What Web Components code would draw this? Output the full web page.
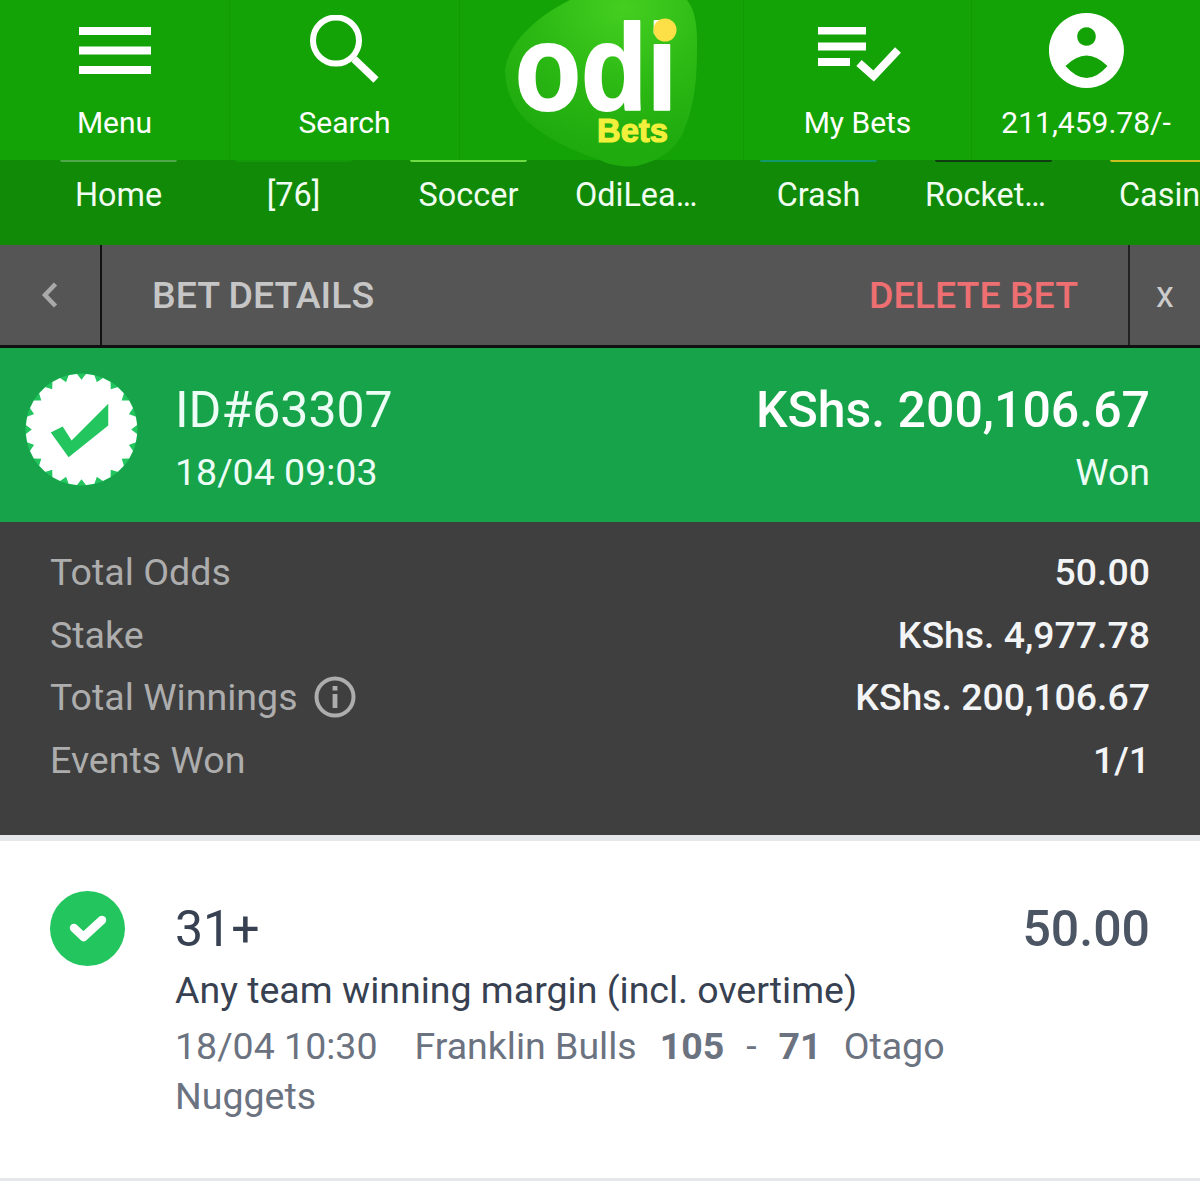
<!doctype html>
<html><head><meta charset="utf-8"><style>
html,body{margin:0;padding:0;background:#fff;font-family:Roboto,sans-serif}
body{width:1200px;height:1182px;overflow:hidden}
</style></head><body>
<odi-header></odi-header>
<odi-nav></odi-nav>
<bet-bar></bet-bar>
<bet-status></bet-status>
<bet-summary></bet-summary>
<bet-event></bet-event>
<script>
const def=(n,html)=>customElements.define(n,class extends HTMLElement{constructor(){super();this.attachShadow({mode:'open'}).innerHTML=html}});
def('odi-header',`<style>
:host{display:grid;grid-template-columns:230px 230px 284px 228px 228px;height:160px;background:#13a306;position:relative;z-index:2;color:#fff;font:400 30px Roboto,sans-serif}
.c{display:flex;flex-direction:column;align-items:center;border-right:1px solid #119a06;position:relative;box-sizing:border-box}
.c:last-child{border:0}
.i{height:104.5px;display:flex;align-items:center;justify-content:center}
span{display:block;line-height:36px}
svg{display:block}
.logo{position:absolute;left:45px;top:0;width:195px;height:170px;overflow:visible}
</style>
<div class="c"><div class="i"><svg width="72" height="47" style="margin-top:-4px"><path fill="#fff" d="M0 0h72v8H0zM0 19.5h72v8H0zM0 39h72v8H0z"/></svg></div><span>Menu</span></div>
<div class="c"><div class="i"><svg width="70" height="70" viewBox="0 0 70 70" style="margin-top:-4px"><circle cx="26" cy="25.5" r="23" fill="none" stroke="#fff" stroke-width="6"/><path d="M44 44L66 65" stroke="#fff" stroke-width="7.5" fill="none"/></svg></div><span>Search</span></div>
<div class="c"><svg class="logo" viewBox="0 0 195 170"><defs><radialGradient id="g" cx=".62" cy=".05" r=".85"><stop offset="0" stop-color="#44cf20"/><stop offset=".55" stop-color="#2cb914"/><stop offset="1" stop-color="#1fab0e"/></radialGradient></defs>
<path fill="url(#g)" d="M0 70C4 40 35 15 65 0L182 0C190 10 192 25 192 40C192 70 192 100 178 133C170 150 155 160 132 166C115 168 100 163 95 160C65 150 35 135 18 117C8 105 0 90 0 70Z"/>
<text x="10" y="110" fill="#fff" font-family="'Liberation Sans',sans-serif" font-weight="700" font-size="122" textLength="162" lengthAdjust="spacingAndGlyphs" stroke="#fff" stroke-width="1.8" stroke-linejoin="round">odi</text>
<circle cx="160" cy="30" r="11.5" fill="#fde047"/>
<text x="92" y="142" fill="#f2f03c" stroke="#f2f03c" stroke-width="1.2" font-family="'Liberation Sans',sans-serif" font-weight="700" font-size="34" textLength="71" lengthAdjust="spacingAndGlyphs">Bets</text></svg></div>
<div class="c"><div class="i"><svg width="84" height="56" viewBox="0 0 84 56" style="margin-top:5px;margin-left:4px"><path fill="#fff" d="M0 0h48v7.5H0zM0 15.5h48v8H0zM0 31h32v8H0z"/><path d="M41 36L55.6 49L80 23" fill="none" stroke="#fff" stroke-width="8"/></svg></div><span>My Bets</span></div>
<div class="c"><div class="i"><svg width="75" height="75" viewBox="0 0 75 75" style="margin-top:-4px;margin-left:1px"><path fill="#fff" fill-rule="evenodd" d="M37.5 0A37.5 37.5 0 1 1 37.4 0ZM37.5 14.2a9.3 9.3 0 1 0 .01 0ZM16.5 53Q27 42.5 37.5 42.5Q48 42.5 58.5 53Q48 65 37.5 65Q27 65 16.5 53Z"/></svg></div><span>211,459.78/-</span></div>`);
def('odi-nav',`<style>
:host{display:flex;height:85px;background:#118a08;color:#f0fdf0;font:400 32.4px Roboto,sans-serif;overflow:hidden;padding-left:31px;box-sizing:border-box}
div{flex:0 0 175px;box-sizing:border-box;padding:0 20px;position:relative;text-align:center;line-height:70px;white-space:nowrap}
i{position:absolute;left:29px;right:29px;top:0;height:2px;border-radius:0 0 6px 6px}
.l{padding-left:0;padding-right:0;text-align:left;text-indent:19px}
</style>
<div><i style="background:#4fa84a"></i>Home</div>
<div><i style="background:#129808"></i>[76]</div>
<div><i style="background:#6fdc45"></i>Soccer</div>
<div class="l">OdiLea…</div>
<div><i style="background:#109a6a"></i>Crash</div>
<div class="l"><i style="background:#0d3d10"></i>Rocket…</div>
<div class="l" style="text-indent:38px"><i style="background:#c8c020"></i>Casino</div>`);
def('bet-bar',`<style>
:host{display:flex;height:103px;background:#555;border-bottom:3px solid #111;box-sizing:border-box;color:#c6c6c6;font:500 37.5px Roboto,sans-serif;align-items:stretch}
.b{width:100px;flex:none;display:flex;align-items:center;justify-content:center;border-right:2px solid #111}
.t{flex:1;display:flex;align-items:center;justify-content:space-between;padding:0 50px 1px 50px}
.d{color:#ee6f72}
.x{width:70px;flex:none;border-left:2px solid #222;display:flex;align-items:center;justify-content:center;font-weight:400;font-size:36px;color:#ccc}
</style>
<div class="b"><svg width="18" height="30" viewBox="0 0 18 30"><path d="M14.5 4L4 15L14.5 26" fill="none" stroke="#a9a9a9" stroke-width="4.5"/></svg></div>
<div class="t"><span>BET DETAILS</span><span class="d">DELETE BET</span></div>
<div class="x">x</div>`);
def('bet-status',`<style>
:host{display:flex;height:174px;background:#16a34a;color:#ecfdf5;font:400 37.5px Roboto,sans-serif;box-sizing:border-box;padding:0 50px 0 25px;align-items:center}
svg{flex:none;margin-right:37px;margin-top:-12px}
.m{flex:1;margin-top:11px}.r{text-align:right;margin-top:11px}
.a{font-size:50px;line-height:62px}
.s{line-height:62px}
.amt{font-size:50px;font-weight:500;line-height:62px;color:#fff}
</style>
<svg width="113" height="113" viewBox="-57 -57 114 114"><circle r="56.5" fill="#22c55e"/><polygon id="p" fill="#fff" stroke="#fff" stroke-width="1.5" stroke-linejoin="round"/><path fill="#22c55e" d="M-31 3L-19 -3L-10 11L27 -26L27 -4L-13 28Z"/></svg>
<div class="m"><div class="a">ID#63307</div><div class="s">18/04 09:03</div></div>
<div class="r"><div class="amt">KShs. 200,106.67</div><div class="s">Won</div></div>`);
def('bet-summary',`<style>
:host{display:block;background:#3f3f3f;height:313px;box-sizing:border-box;padding:19px 50px 0;font:400 37.6px Roboto,sans-serif;color:#adadad}
.row{display:flex;justify-content:space-between;align-items:center;height:62.5px}
b{font-weight:500;color:#f3f4f6;font-size:37.4px}
.l{display:flex;align-items:center;gap:16px}
</style>
<div class="row"><span>Total Odds</span><b>50.00</b></div>
<div class="row"><span>Stake</span><b>KShs. 4,977.78</b></div>
<div class="row"><span class="l">Total Winnings <svg width="42" height="42" viewBox="0 0 42 42"><circle cx="21" cy="21" r="18.5" fill="none" stroke="#adadad" stroke-width="4"/><path d="M18.6 18h4.8v14h-4.8zM18.6 10h4.8v4.6h-4.8z" fill="#adadad"/></svg></span><b>KShs. 200,106.67</b></div>
<div class="row"><span>Events Won</span><b>1/1</b></div>`);
def('bet-event',`<style>
:host{display:flex;border-top:6px solid #e5e7eb;border-bottom:3px solid #e5e7eb;height:346px;box-sizing:border-box;padding:50px 50px 0;background:#fff;font:400 37.5px Roboto,sans-serif;color:#374151}
svg{flex:none;margin-right:50px;}
.m{flex:1}
.p{font-size:50px;line-height:62px;margin-top:7px}
.o{font-size:50px;font-weight:500;line-height:62px;margin-top:7px;color:#4b5563}
.n{line-height:62px;margin-top:-1px}
.g{color:#6b7280;line-height:50px;margin-top:0}
.g b{font-weight:700}
.g span{margin-left:22px}
</style>
<svg width="75" height="75" viewBox="0 0 75 75"><circle cx="37.5" cy="37.5" r="37.5" fill="#22c55e"/><path d="M24 37l9.5 9L52 29" fill="none" stroke="#fff" stroke-width="8.5" stroke-linecap="round" stroke-linejoin="round"/></svg>
<div class="m"><div class="p">31+</div><div class="n">Any team winning margin (incl. overtime)</div><div class="g">18/04 10:30<span style="margin-left:37px">Franklin Bulls</span><span style="margin-left:23px"><b>105</b></span><span>-</span><span><b>71</b></span><span>Otago</span> Nuggets</div></div>
<div class="o">50.00</div>`);
const pts=[];const n=20,st=2*Math.PI/n;for(let k=0;k<n;k++){const c=(k+.5)*st;[[49,-.5],[55.5,-.22],[55.5,.22],[49,.5]].forEach(([r,d])=>{const a=c+d*st;pts.push((r*Math.sin(a)).toFixed(1)+','+(-r*Math.cos(a)).toFixed(1))})}
document.querySelector('bet-status').shadowRoot.getElementById('p').setAttribute('points',pts.join(' '));
</script>
</body></html>
